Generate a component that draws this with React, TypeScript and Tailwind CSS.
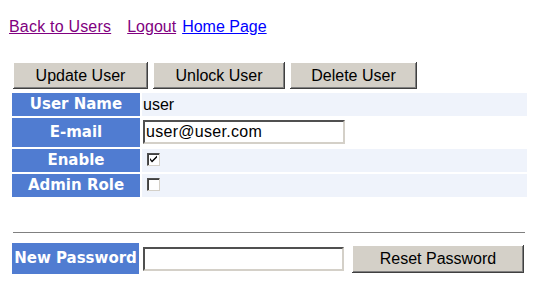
import React from "react";

const btn =
  "bg-[#d4d0c8] text-black text-[16px] leading-none flex items-center justify-center shadow-[inset_-1px_-1px_#404040,inset_1px_1px_#ffffff,inset_-2px_-2px_#808080]";
const label =
  "bg-[#507CD1] text-white font-bold text-[15px] flex items-center justify-center whitespace-nowrap [font-family:'DejaVu_Sans',Verdana,sans-serif]";
const inset =
  "bg-white border-2 border-t-[#505050] border-l-[#505050] border-b-[#d4d0c8] border-r-[#d4d0c8]";

function Checkbox({ checked }: { checked?: boolean }) {
  return (
    <div className={`w-[13px] h-[13px] ${inset} border-[1px] shadow-[inset_1px_1px_#404040] flex items-center justify-center`}>
      {checked && (
        <svg width="9" height="9" viewBox="0 0 9 9">
          <path d="M1 3 L3 5.5 L8 0.5 L8 2.5 L3 7.5 L1 5 Z" fill="#000" />
        </svg>
      )}
    </div>
  );
}

export default function App() {
  return (
    <div className="w-[537px] h-[283px] bg-white [font-family:'Liberation_Sans',Arial,sans-serif] text-black overflow-hidden">
      <div className="pt-[18px] pl-[9px] text-[16px] leading-[18px] flex">
        <a href="#" className="text-[#800080] underline tracking-[0.2px]">Back to Users</a>
        <a href="#" className="text-[#800080] underline ml-[16px]">Logout</a>
        <a href="#" className="text-[#0000ff] underline ml-[6px]">Home Page</a>
      </div>

      <div className="mt-[26px] pl-[13px] flex gap-[5px]">
        <div className={`${btn} w-[135px] h-[27px]`}>Update User</div>
        <div className={`${btn} w-[132px] h-[27px]`}>Unlock User</div>
        <div className={`${btn} w-[127px] h-[27px]`}>Delete User</div>
      </div>

      <div className="mt-[2px] ml-[10px] w-[519px] p-[2px] grid grid-cols-[128px_385px] gap-[2px]">
        <div className={`${label} h-[23px]`}>User Name</div>
        <div className="bg-[#EFF3FB] h-[23px] flex items-center pl-[1px] text-[16px]">user</div>

        <div className={`${label} h-[29px]`}>E-mail</div>
        <div className="bg-white h-[29px] flex items-start pt-[2px] pl-[1px]">
          <div className={`${inset} w-[202px] h-[24px] flex items-center pl-[1px] text-[16px] leading-none tracking-[0.3px]`}>
            user@user.com
          </div>
        </div>

        <div className={`${label} h-[23px]`}>Enable</div>
        <div className="bg-[#EFF3FB] h-[23px] flex items-start pt-[4px] pl-[5px]">
          <Checkbox checked />
        </div>

        <div className={`${label} h-[23px]`}>Admin Role</div>
        <div className="bg-[#EFF3FB] h-[23px] flex items-start pt-[4px] pl-[5px]">
          <Checkbox />
        </div>
      </div>

      <div className="mt-[33px] ml-[13px] w-[512px] h-[1px] bg-[#808080]" />

      <div className="mt-[10px] pl-[12px] flex items-center">
        <div className={`${label} w-[127px] h-[31px]`}>New Password</div>
        <div className={`${inset} ml-[4px] w-[201px] h-[24px]`} />
        <div className={`${btn} ml-[8px] w-[172px] h-[28px]`}>Reset Password</div>
      </div>
    </div>
  );
}
